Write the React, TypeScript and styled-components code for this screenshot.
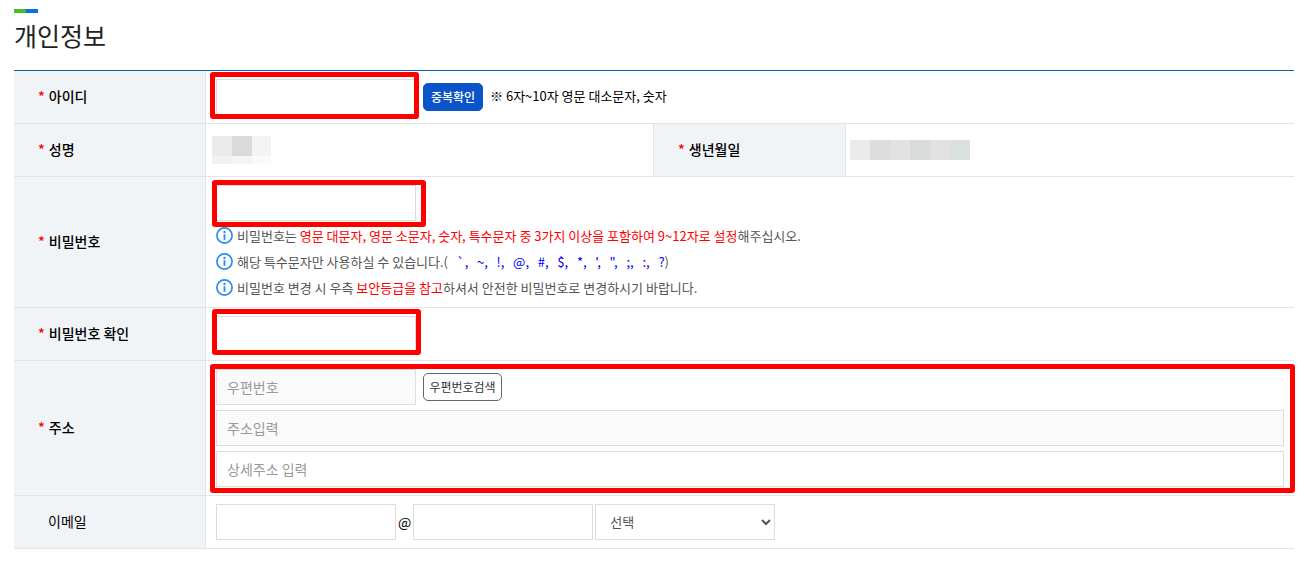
import React from 'react';
import styled, { createGlobalStyle } from 'styled-components';

const GlobalStyle = createGlobalStyle`
  * { box-sizing: border-box; }
  body {
    margin: 0;
    background: #fff;
    color: #000;
    font-family: "Noto Sans CJK KR", "Noto Sans", sans-serif;
    font-size: 14px;
    line-height: 20px;
  }
  input, button, select { font-family: inherit; margin: 0; }
`;

const Page = styled.form`
  padding: 9px 12px 20px 14px;
`;

const TitleBar = styled.div`
  width: 24px;
  height: 4px;
  background: linear-gradient(to right, #46be1e 50%, #0674dc 50%);
`;

const Title = styled.h1`
  margin: 3px 0 16px;
  font-size: 25px;
  font-weight: 400;
  line-height: 38px;
  color: #222;
`;

const FormTable = styled.table`
  width: 100%;
  table-layout: fixed;
  border-collapse: separate;
  border-spacing: 0;
  border-top: 1px solid #0560b0;
`;

const HeadCell = styled.th<{ $optional?: boolean }>`
  padding: 0 0 2px ${p => (p.$optional ? 34 : 24)}px;
  text-align: left;
  vertical-align: middle;
  font-weight: ${p => (p.$optional ? 400 : 500)};
  background: #f0f4f7;
  border-right: 1px solid #e4e4e4;
  border-bottom: 1px solid #e4e4e4;
`;

const Star = styled.span`
  margin-right: 4px;
  color: #f00;
`;

const Cell = styled.td<{ $divided?: boolean; $left?: number }>`
  height: 53px;
  padding: 8px 10px 8px ${p => p.$left ?? 10}px;
  vertical-align: middle;
  border-right: ${p => (p.$divided ? '1px solid #e4e4e4' : '0')};
  border-bottom: 1px solid #e4e4e4;
`;

const Line = styled.div<{ $gap?: number }>`
  display: flex;
  align-items: center;
  gap: ${p => p.$gap ?? 7}px;
`;

const Stack = styled.div`
  position: relative;
  display: flex;
  flex-direction: column;
  gap: 5px;
`;

const Field = styled.div`
  position: relative;
  width: 200px;
  height: 36px;
`;

const TextInput = styled.input<{ $width?: string }>`
  display: block;
  width: ${p => p.$width ?? '200px'};
  height: 36px;
  padding: 0 10px;
  font-size: 14px;
  color: #333;
  background: #fff;
  border: 1px solid #ddd;
  border-radius: 0;
  outline: none;
  &:read-only { background: #fafafa; }
  &::placeholder { color: #999; opacity: 1; }
`;

const Highlight = styled.span<{ $top: number; $right: number; $bottom: number; $left: number }>`
  position: absolute;
  top: ${p => -p.$top}px;
  right: ${p => -p.$right}px;
  bottom: ${p => -p.$bottom}px;
  left: ${p => -p.$left}px;
  border: 5px solid #f00;
  border-radius: 3px;
  pointer-events: none;
`;

const Button = styled.button<{ $primary?: boolean }>`
  height: 28px;
  min-width: ${p => (p.$primary ? 60 : 79)}px;
  padding: 0 5px;
  font-size: 12px;
  font-weight: ${p => (p.$primary ? 500 : 400)};
  line-height: 18px;
  color: ${p => (p.$primary ? '#fff' : '#333')};
  background: ${p => (p.$primary ? '#0b53c8' : '#fff')};
  border: 1px solid ${p => (p.$primary ? '#0b53c8' : '#666')};
  border-radius: 5px;
`;

const Hint = styled.span`
  padding-bottom: 2px;
  font-size: 13px;
`;

const Notes = styled.ul`
  margin: 0;
  padding: 0;
  list-style: none;
  font-size: 13px;
  line-height: 26px;
  color: #555;
`;

const Note = styled.li`
  display: flex;
  gap: 4px;
  height: 26px;
  svg { flex: none; margin-top: 6px; }
`;

const NoteText = styled.span`
  padding-top: 2px;
  white-space: pre;
`;

const Red = styled.span`
  color: #f00;
`;

const Blue = styled.span`
  color: #00f;
`;

const Mosaic = styled.div<{ $columns: string; $rows: string }>`
  display: grid;
  width: max-content;
  grid-template-columns: ${p => p.$columns};
  grid-template-rows: ${p => p.$rows};
`;

const Tile = styled.span<{ $color: string }>`
  background: ${p => p.$color};
`;

const Select = styled.select`
  width: 180px;
  height: 36px;
  padding: 0 2px 2px 10px;
  font-size: 13px;
  color: #555;
  background: #fff;
  border: 1px solid #ddd;
  border-radius: 0;
`;

const InfoIcon = () => (
  <svg width="17" height="17" viewBox="0 0 17 17" fill="none" aria-hidden="true">
    <circle cx="8.5" cy="8.5" r="7.6" stroke="#2a8cf0" strokeWidth="1.7" />
    <circle cx="8.5" cy="5" r="1.2" fill="#2a8cf0" />
    <path d="M8.5 7.2V12.8" stroke="#2a8cf0" strokeWidth="1.9" />
  </svg>
);

const nameTiles = ['#eaeae9', '#d8dbda', '#f2f4f6', '#f1f1f1', '#f4f4f4', '#fafafa'];
const birthTiles = ['#ebebeb', '#dddddd', '#e2e2e2', '#d9dada', '#e1e1e1', '#dadfdf'];

const Required = ({ children, htmlFor }: { children: string; htmlFor?: string }) => (
  <HeadCell scope="row">
    <Star>*</Star>
    {htmlFor ? <label htmlFor={htmlFor}>{children}</label> : children}
  </HeadCell>
);

export default function App() {
  return (
    <>
      <GlobalStyle />
      <Page onSubmit={e => e.preventDefault()}>
        <TitleBar />
        <Title>개인정보</Title>
        <FormTable>
          <colgroup>
            <col style={{ width: '15%' }} />
            <col style={{ width: '35%' }} />
            <col style={{ width: '15%' }} />
            <col style={{ width: '35%' }} />
          </colgroup>
          <tbody>
            <tr>
              <Required htmlFor="userId">아이디</Required>
              <Cell colSpan={3}>
                <Line>
                  <Field>
                    <TextInput id="userId" />
                    <Highlight $top={7} $right={3} $bottom={4} $left={6} />
                  </Field>
                  <Button type="button" $primary>중복확인</Button>
                  <Hint>※ 6자~10자 영문 대소문자, 숫자</Hint>
                </Line>
              </Cell>
            </tr>
            <tr>
              <Required>성명</Required>
              <Cell $divided $left={6}>
                <Mosaic $columns="20px 20px 19px" $rows="20px 8px">
                  {nameTiles.map(c => <Tile key={c} $color={c} />)}
                </Mosaic>
              </Cell>
              <Required>생년월일</Required>
              <Cell $left={4}>
                <Mosaic $columns="repeat(6, 20px)" $rows="20px">
                  {birthTiles.map(c => <Tile key={c} $color={c} />)}
                </Mosaic>
              </Cell>
            </tr>
            <tr>
              <Required htmlFor="password">비밀번호</Required>
              <Cell colSpan={3}>
                <Field>
                  <TextInput id="password" type="password" />
                  <Highlight $top={5} $right={10} $bottom={6} $left={4} />
                </Field>
                <Notes>
                  <Note>
                    <InfoIcon />
                    <NoteText>비밀번호는 <Red>영문 대문자, 영문 소문자, 숫자, 특수문자 중 3가지 이상을 포함하여 9~12자로 설정</Red>해주십시오.</NoteText>
                  </Note>
                  <Note>
                    <InfoIcon />
                    <NoteText>해당 특수문자만 사용하실 수 있습니다.(<Blue>{"   `,   ~,   !,   @,   #,   $,   *,   ',   \",   ;,   :,   ?"}</Blue>)</NoteText>
                  </Note>
                  <Note>
                    <InfoIcon />
                    <NoteText>비밀번호 변경 시 우측 <Red>보안등급을 참고</Red>하셔서 안전한 비밀번호로 변경하시기 바랍니다.</NoteText>
                  </Note>
                </Notes>
              </Cell>
            </tr>
            <tr>
              <Required htmlFor="passwordCheck">비밀번호 확인</Required>
              <Cell colSpan={3}>
                <Field>
                  <TextInput id="passwordCheck" type="password" />
                  <Highlight $top={7} $right={5} $bottom={3} $left={4} />
                </Field>
              </Cell>
            </tr>
            <tr>
              <Required htmlFor="zip">주소</Required>
              <Cell colSpan={3}>
                <Stack>
                  <Line>
                    <TextInput id="zip" placeholder="우편번호" readOnly />
                    <Button type="button">우편번호검색</Button>
                  </Line>
                  <TextInput $width="100%" placeholder="주소입력" aria-label="주소입력" readOnly />
                  <TextInput $width="100%" placeholder="상세주소 입력" aria-label="상세주소 입력" />
                  <Highlight $top={5} $right={11} $bottom={6} $left={6} />
                </Stack>
              </Cell>
            </tr>
            <tr>
              <HeadCell scope="row" $optional><label htmlFor="email">이메일</label></HeadCell>
              <Cell colSpan={3}>
                <Line $gap={2}>
                  <TextInput id="email" $width="180px" />
                  <span>@</span>
                  <TextInput $width="180px" aria-label="이메일 도메인" />
                  <Select aria-label="이메일 도메인 선택">
                    <option>선택</option>
                  </Select>
                </Line>
              </Cell>
            </tr>
          </tbody>
        </FormTable>
      </Page>
    </>
  );
}
